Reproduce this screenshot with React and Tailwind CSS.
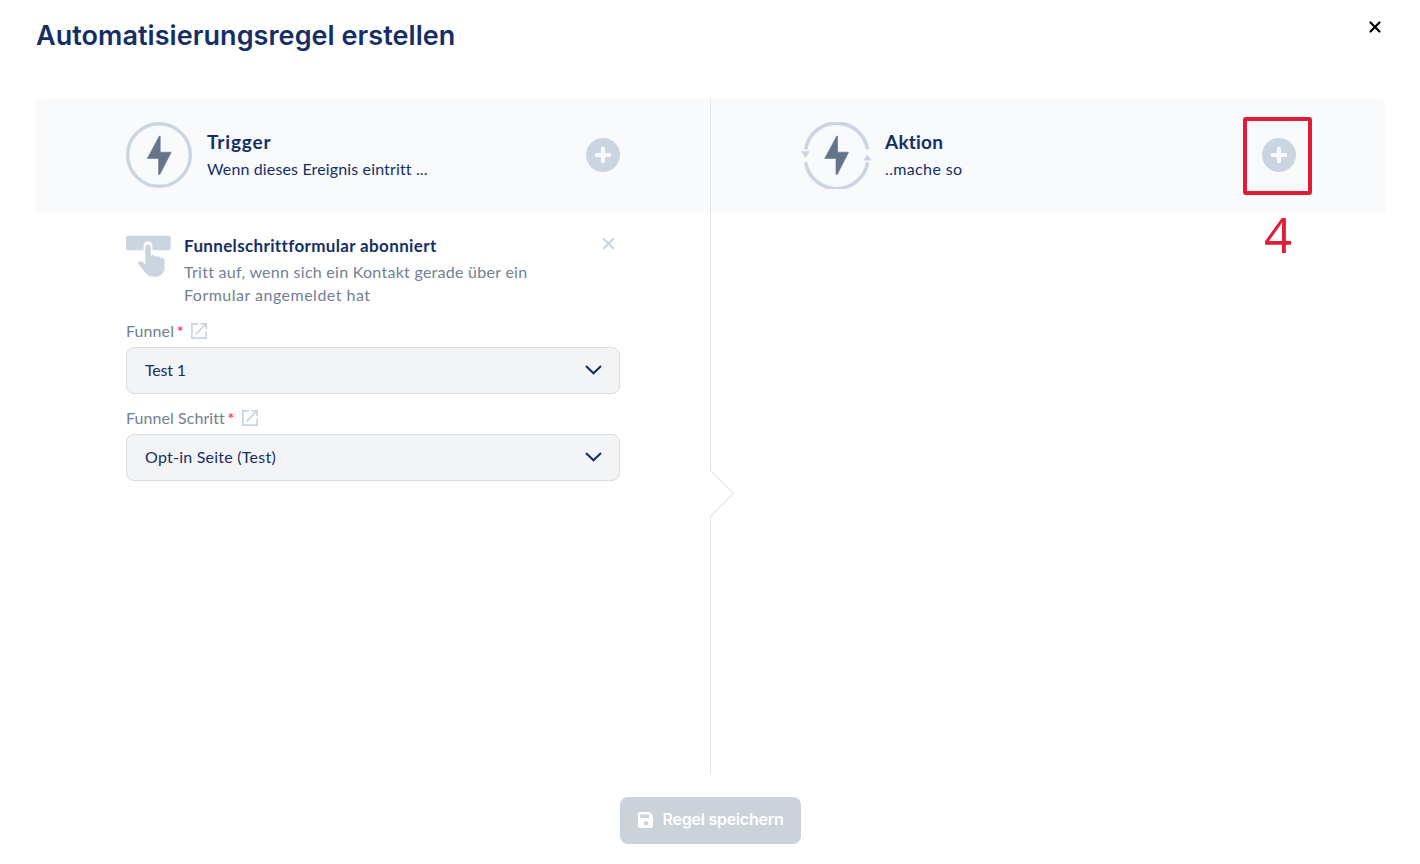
import { X } from "lucide-react";

const BOLT = "M33.4 14 L21.3 36.4 H32.6 V52.4 H33.8 L45.2 30.2 H34.2 V14 Z";

function TriggerIcon() {
  return (
    <svg className="h-[66px] w-[66px] shrink-0" viewBox="0 0 66 66">
      <circle cx="33" cy="33" r="31.3" fill="none" stroke="#cbd5e1" strokeWidth="3.4" />
      <path d={BOLT} fill="#64748b" stroke="#64748b" strokeWidth="0.6" strokeLinejoin="round" />
    </svg>
  );
}

function ActionIcon() {
  return (
    <svg className="h-[67px] w-[72px] shrink-0" viewBox="0 0 72 67">
      <g fill="none" stroke="#cbd5e1" strokeWidth="3.6">
        <path d="M5.6 27.5 A31.4 31.4 0 0 1 67.6 27.5" />
        <path d="M5.6 40.3 A31.4 31.4 0 0 0 67.6 40.3" />
      </g>
      <path d="M1 29.3 H10 L5.5 35.9 Z M63.2 38.6 H71.6 L67.4 32.4 Z" fill="#cbd5e1" />
      <path d={BOLT} transform="translate(3.4 0)" fill="#64748b" stroke="#64748b" strokeWidth="0.6" strokeLinejoin="round" />
    </svg>
  );
}

function AddButton() {
  return (
    <button className="mb-px h-[34px] w-[34px] shrink-0">
      <svg viewBox="0 0 34 34" className="h-full w-full">
        <circle cx="17" cy="17" r="17" fill="#cbd5e1" />
        <path d="M17 10.7 V23.3 M10.7 17 H23.3" stroke="#f8fafc" strokeWidth="4.2" strokeLinecap="round" />
      </svg>
    </button>
  );
}

function FormTapIcon() {
  return (
    <svg className="h-[42px] w-[45px] shrink-0" viewBox="0 0 45 42">
      <rect x="0" y="0.8" width="44.7" height="14.4" rx="2" fill="#cbd5e1" />
      <path
        d="M18.8 28 V12 C18.8 8.9 20.2 7.6 22 7.6 C23.9 7.6 25.2 8.9 25.2 12 V20"
        fill="#fff"
        stroke="#fff"
        strokeWidth="2.5"
      />
      <path
        d="M19.3 29.2 V12.4 C19.3 10.6 20.4 9.6 22 9.6 C23.6 9.6 24.8 10.6 24.8 12.4 V20.8 C26.6 19.5 28.8 20.1 29.6 21.7 C31.3 20.6 33.4 21.2 34 23 C36.3 21.9 38.6 23.2 38.6 25.7 V32 C38.6 37.6 35.2 41.7 30 41.7 H27 C23.8 41.7 21.5 40.4 19.7 38.1 L12.8 29.7 C11.8 28.3 12.2 27.3 13.1 26.6 C14.1 25.9 15.4 26.1 16.4 26.8 Z"
        fill="#cbd5e1"
      />
    </svg>
  );
}

function ExternalIcon() {
  return (
    <svg className="h-4 w-4" viewBox="0 0 16 16" fill="none" stroke="#cbd5e1" strokeWidth="1.7">
      <path d="M7.2 0.85 H0.85 V15.15 H15.15 V8.6" />
      <path d="M9.8 0.85 H15.15 V6.2 M15 1 L4.6 11.4" />
    </svg>
  );
}

function SelectField({ label, labelClass, value, valueClass }) {
  return (
    <div>
      <div className="flex h-6 items-center text-base text-[#718096]">
        <span className={labelClass}>{label}</span>
        <span className="ml-[3px] w-[6px] text-[15px] font-bold text-[#ff3860]">*</span>
        <span className="ml-2">
          <ExternalIcon />
        </span>
      </div>
      <div className="mt-1 flex h-[47px] items-center justify-between rounded-lg border border-[#d8dde2] bg-[#f3f4f6] pr-[17px] pb-[2px] pl-[18px] text-base text-[#152f66]">
        <span className={valueClass}>{value}</span>
        <svg className="h-[10px] w-[17px]" viewBox="0 0 17 10" fill="none" stroke="#152f66" strokeWidth="2.1">
          <path d="M1 0.9 L8.5 8.2 L16 0.9" />
        </svg>
      </div>
    </div>
  );
}

export default function App() {
  return (
    <div className="flex h-[864px] w-[1420px] flex-col overflow-hidden bg-white px-9 font-['Lato',sans-serif] text-[#152f66]">
      <header className="flex h-[99px] shrink-0 items-start justify-between">
        <h1 className="mt-4 font-['Inter',sans-serif] text-[27px] leading-10 font-semibold tracking-[0.05px]">
          Automatisierungsregel erstellen
        </h1>
        <button className="mt-[18px] text-black">
          <X size={18} strokeWidth={3} />
        </button>
      </header>

      <main className="relative flex h-[675px] w-[1350px] shrink-0">
        <section className="w-[674px]">
          <div className="flex h-[113px] items-center rounded-tl-lg bg-[#f8fafc] pr-[90px] pb-px pl-[90px]">
            <TriggerIcon />
            <div className="ml-[15px] flex-1">
              <h2 className="text-[19px] leading-7 font-bold tracking-[0.85px]">Trigger</h2>
              <p className="text-base leading-[26px] tracking-[0.14px]">Wenn dieses Ereignis eintritt ...</p>
            </div>
            <AddButton />
          </div>

          <div className="ml-[90px] w-[494px] pt-[23px]">
            <div className="flex h-[84px] items-start">
              <FormTapIcon />
              <div className="-mt-px ml-[13px] flex-1 whitespace-nowrap">
                <h3 className="text-[17px] leading-[23px] font-bold tracking-[0.35px]">Funnelschrittformular abonniert</h3>
                <p className="mt-[3px] text-base leading-[23px] text-[#718096]">
                  <span className="tracking-[0.27px]">Tritt auf, wenn sich ein Kontakt gerade über ein</span>
                  <br />
                  <span className="tracking-[0.49px]">Formular angemeldet hat</span>
                </p>
              </div>
              <button className="-mt-px mr-[2px] text-[#cbd5e1]">
                <X size={19} strokeWidth={2.6} />
              </button>
            </div>
            <div className="flex flex-col gap-3">
              <SelectField label="Funnel" labelClass="tracking-[0.1px]" value="Test 1" valueClass="tracking-[-0.2px]" />
              <SelectField
                label="Funnel Schritt"
                labelClass="tracking-[0.07px]"
                value="Opt-in Seite (Test)"
                valueClass="tracking-[0.24px]"
              />
            </div>
          </div>
        </section>

        {/* Divider with the arrow pointing at the action column */}
        <div className="flex w-px flex-col items-start">
          <div className="h-[371px] w-px bg-[#e2e4e8]" />
          <svg className="h-[47px] w-[25px] shrink-0" viewBox="0 0 25 47" fill="none" stroke="#e2e4e8" strokeWidth="1.1">
            <path d="M0.5 0 V0.5 L23.5 23.5 L0.5 46.5 V47" />
          </svg>
          <div className="w-px flex-1 bg-[#e2e4e8]" />
        </div>

        <section className="w-[675px]">
          <div className="flex h-[113px] items-center rounded-tr-lg bg-[#f8fafc] pr-[90px] pb-px pl-[89px]">
            <ActionIcon />
            <div className="ml-[13px] flex-1">
              <h2 className="text-[19px] leading-7 font-bold tracking-[0.2px]">Aktion</h2>
              <p className="text-base leading-[26px] tracking-[0.36px]">..mache so</p>
            </div>
            <AddButton />
          </div>
        </section>

        {/* Step annotation around the add button */}
        <div className="absolute top-[18px] left-[1207px] h-[78px] w-[69px] rounded-[3px] border-4 border-[#e11d36]" />
        <span className="absolute top-[105px] left-[1228px] font-['Open_Sans',sans-serif] text-[49px] leading-[60px] text-[#e11d36]">
          4
        </span>
      </main>

      <footer className="flex justify-center pt-[23px]">
        <button className="flex h-[47px] w-[181px] items-center rounded-lg bg-[#cbd2d9] pb-[2px] pl-[18px] font-['Inter',sans-serif] text-base font-semibold text-white">
          <svg className="h-4 w-[15px]" viewBox="0 0 15 16">
            <path
              d="M2 0 H11.3 L15 3.7 V14 A2 2 0 0 1 13 16 H2 A2 2 0 0 1 0 14 V2 A2 2 0 0 1 2 0 Z M2.2 2.4 V6 H11 V2.4 Z M8 9 A2.3 2.3 0 1 0 8 13.6 A2.3 2.3 0 1 0 8 9 Z"
              fill="#fff"
              fillRule="evenodd"
            />
          </svg>
          <span className="mb-px ml-[10px] tracking-[-0.25px]">Regel speichern</span>
        </button>
      </footer>
    </div>
  );
}
